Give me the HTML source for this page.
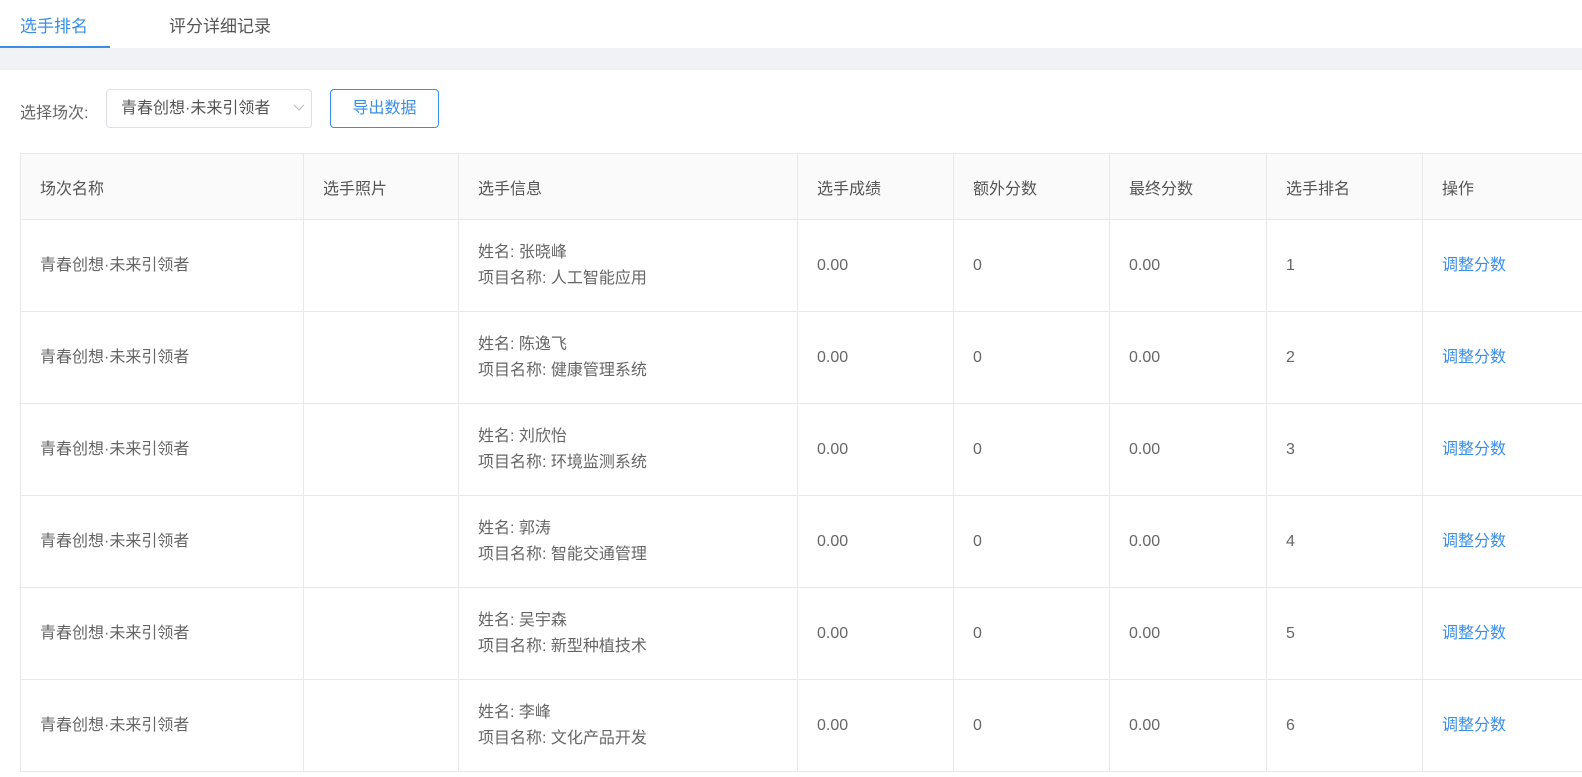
<!DOCTYPE html>
<html><head><meta charset="utf-8"><style>
*{margin:0;padding:0;box-sizing:border-box}
body{width:1582px;height:777px;overflow:hidden;background:#fff;font-family:"Liberation Sans","Noto Sans CJK SC",sans-serif;color:#666;font-size:16px}
.tabs{height:48px;position:relative}
.tab{position:absolute;top:12px;font-size:17px}
.t1{left:20px;color:#3a8ee6}
.t2{left:169px;color:#555}
.ul{position:absolute;left:0;top:46px;width:110px;height:2px;background:#3a8ee6}
.band{height:22px;background:#f0f2f5}
.lab{position:absolute;left:20px;top:99px;color:#666}
.sel{position:absolute;left:106px;top:89px;width:206px;height:39px;border:1px solid #dcdfe6;border-radius:4px;padding:0 0 0 14px;line-height:37px;color:#555;white-space:nowrap;overflow:hidden}
.sel svg{position:absolute;right:6px;top:14px}
.btn{position:absolute;left:330px;top:89px;width:109px;height:39px;border:1px solid #3a8ee6;border-radius:4px;color:#3a8ee6;text-align:center;line-height:37px}
table{position:absolute;left:20px;top:153px;border-collapse:collapse;table-layout:fixed;width:1600px}
td,th{border:1px solid #e8e8e8;text-align:left;font-weight:normal;padding:0 0 0 19px;vertical-align:middle}
th{height:66px;background:#fafafa;color:#555}
td{height:92px;line-height:26px}
.a{color:#3a8ee6}
</style></head><body>
<div class="tabs"><div class="tab t1">选手排名</div><div class="tab t2">评分详细记录</div><div class="ul"></div></div>
<div class="band"></div>
<div class="lab">选择场次:</div>
<div class="sel">青春创想·未来引领者<svg width="12" height="8" viewBox="0 0 12 8"><path d="M1 1L6 6L11 1" fill="none" stroke="#bbb" stroke-width="1"/></svg></div>
<div class="btn">导出数据</div>
<table>
<colgroup><col style="width:283px"><col style="width:155px"><col style="width:339px"><col style="width:156px"><col style="width:156px"><col style="width:157px"><col style="width:156px"><col style="width:198px"></colgroup>
<tr><th>场次名称</th><th>选手照片</th><th>选手信息</th><th>选手成绩</th><th>额外分数</th><th>最终分数</th><th>选手排名</th><th>操作</th></tr>
<tr><td>青春创想·未来引领者</td><td></td><td>姓名: 张晓峰<br>项目名称: 人工智能应用</td><td>0.00</td><td>0</td><td>0.00</td><td>1</td><td class="a">调整分数</td></tr>
<tr><td>青春创想·未来引领者</td><td></td><td>姓名: 陈逸飞<br>项目名称: 健康管理系统</td><td>0.00</td><td>0</td><td>0.00</td><td>2</td><td class="a">调整分数</td></tr>
<tr><td>青春创想·未来引领者</td><td></td><td>姓名: 刘欣怡<br>项目名称: 环境监测系统</td><td>0.00</td><td>0</td><td>0.00</td><td>3</td><td class="a">调整分数</td></tr>
<tr><td>青春创想·未来引领者</td><td></td><td>姓名: 郭涛<br>项目名称: 智能交通管理</td><td>0.00</td><td>0</td><td>0.00</td><td>4</td><td class="a">调整分数</td></tr>
<tr><td>青春创想·未来引领者</td><td></td><td>姓名: 吴宇森<br>项目名称: 新型种植技术</td><td>0.00</td><td>0</td><td>0.00</td><td>5</td><td class="a">调整分数</td></tr>
<tr><td>青春创想·未来引领者</td><td></td><td>姓名: 李峰<br>项目名称: 文化产品开发</td><td>0.00</td><td>0</td><td>0.00</td><td>6</td><td class="a">调整分数</td></tr>
</table>
</body></html>
